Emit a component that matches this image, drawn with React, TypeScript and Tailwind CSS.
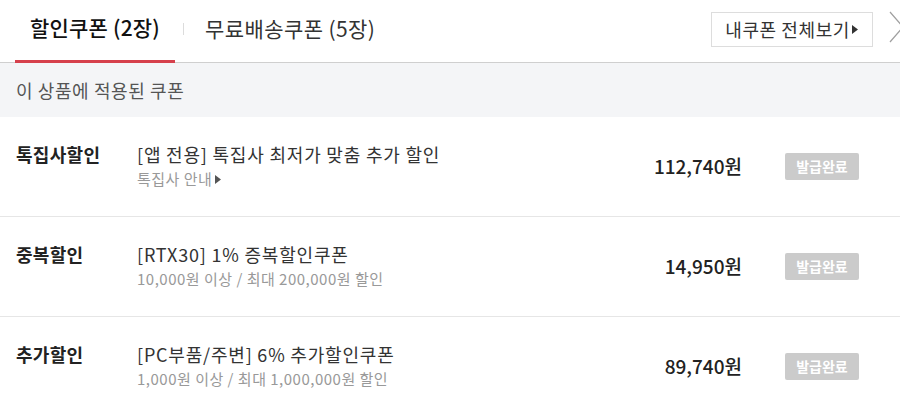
const coupons = [
    {
        type: "톡집사할인",
        title: "[앱 전용] 톡집사 최저가 맞춤 추가 할인",
        sub: "톡집사 안내",
        subArrow: true,
        price: "112,740원",
    },
    {
        type: "중복할인",
        title: "[RTX30] 1% 증복할인쿠폰",
        sub: "10,000원 이상 / 최대 200,000원 할인",
        subArrow: false,
        price: "14,950원",
    },
    {
        type: "추가할인",
        title: "[PC부품/주변] 6% 추가할인쿠폰",
        sub: "1,000원 이상 / 최대 1,000,000원 할인",
        subArrow: false,
        price: "89,740원",
    },
];

function Caret({ className }: { className?: string }) {
    return (
        <svg width="6" height="9" viewBox="0 0 6 9" className={className}>
            <path d="M0 0 L6 4.5 L0 9 Z" fill="currentColor" />
        </svg>
    );
}

function App() {
    return (
        <div className="w-[900px] h-[415px] overflow-hidden bg-white font-['Noto_Sans_CJK_KR','Noto_Sans',sans-serif]">
            {/* tabs */}
            <div className="flex items-stretch h-[63px] border-b border-[#cfcfcf]">
                <div className="ml-[15px] flex items-center px-[15px] pb-[5px] border-b-[3px] border-[#d6404c] -mb-px text-[21px] tracking-[0.2px] font-medium text-[#111]">
                    할인쿠폰 (2장)
                </div>
                <div className="self-center -mt-[4px] ml-[8px] w-px h-[12px] bg-[#dcdcdc]" />
                <div className="flex items-center pb-[5px] ml-[21px] text-[21px] tracking-[0.4px] text-[#333]">
                    무료배송쿠폰 (5장)
                </div>
                <div className="ml-auto mt-[12px] self-start h-[35px] flex items-center pl-[13px] pr-[14px] border border-[#dddddd] text-[18px] tracking-[0.6px] text-[#333]">
                    내쿠폰 전체보기
                    <Caret className="ml-[2px] text-[#333]" />
                </div>
                <svg width="16" height="32" viewBox="0 0 16 32" className="ml-[16px] -mr-[5px] mt-[11px] shrink-0">
                    <polyline points="1,1 14,16 1,31" fill="none" stroke="#a0a0a0" strokeWidth="1.2" />
                </svg>
            </div>

            {/* applied header */}
            <div className="h-[54px] bg-[#f4f5f7] px-4 flex items-center text-[18px] tracking-[0.6px] text-[#555]">
                이 상품에 적용된 쿠폰
            </div>

            {coupons.map((c) => (
                <div key={c.type} className="h-[100px] flex border-b border-[#e6e6e6]">
                    <div className="w-[137px] shrink-0 pl-4 pt-[25px] text-[18px] tracking-[0.3px] leading-[25px] font-bold text-[#222]">
                        {c.type}
                    </div>
                    <div className="flex-1 pt-[25px]">
                        <p className="text-[18px] leading-[25px] tracking-[0.8px] text-[#333]">{c.title}</p>
                        <p className="mt-[2px] flex items-center text-[15px] leading-[20px] tracking-[0.5px] text-[#999]">
                            {c.sub}
                            {c.subArrow && <Caret className="ml-[3px] text-[#555]" />}
                        </p>
                    </div>
                    <div className="self-center text-[19px] font-medium text-[#222]">{c.price}</div>
                    <div className="self-center ml-[43px] mr-[41px] w-[74px] h-[27px] rounded-[2px] bg-[#cbcbcb] flex items-center justify-center text-[14px] font-bold text-white">
                        발급완료
                    </div>
                </div>
            ))}
        </div>
    );
}

export default App;
